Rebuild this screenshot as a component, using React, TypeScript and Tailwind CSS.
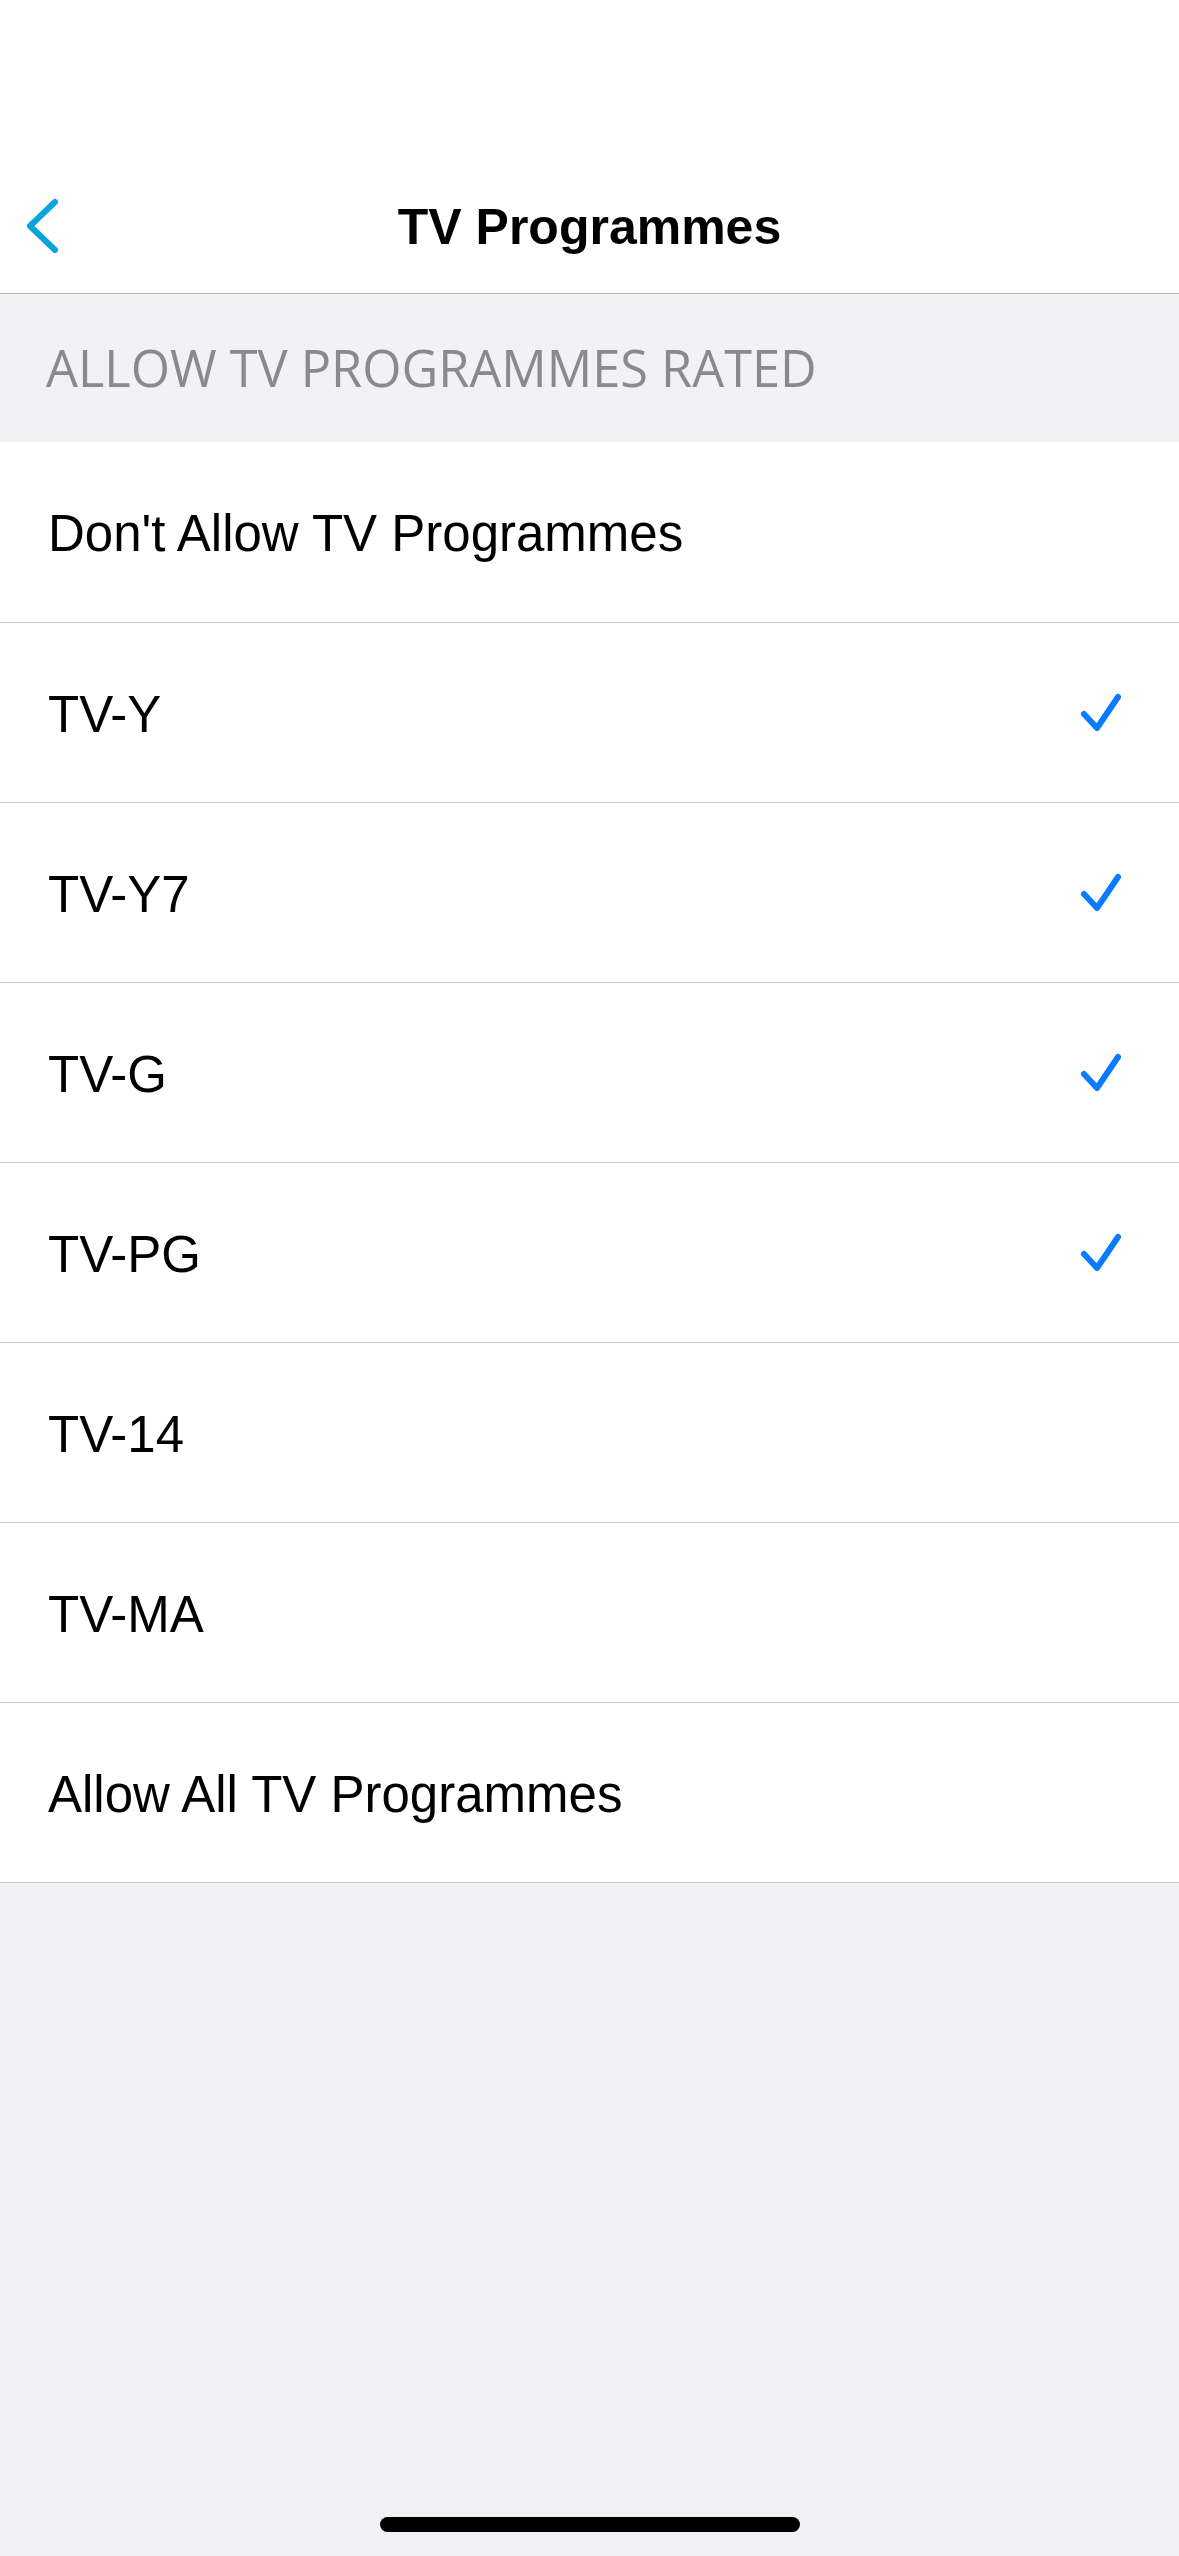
const ratings = [
  { label: "Don't Allow TV Programmes", checked: false },
  { label: 'TV-Y', checked: true },
  { label: 'TV-Y7', checked: true },
  { label: 'TV-G', checked: true },
  { label: 'TV-PG', checked: true },
  { label: 'TV-14', checked: false },
  { label: 'TV-MA', checked: false },
  { label: 'Allow All TV Programmes', checked: false },
]

function Check() {
  return (
    <svg width="44" height="42" viewBox="0 0 44 42" fill="none">
      <path
        d="M5 22L18 36L39 5"
        stroke="#0a7aff"
        strokeWidth="6"
        strokeLinecap="round"
        strokeLinejoin="round"
      />
    </svg>
  )
}

function BackChevron() {
  return (
    <svg width="40" height="60" viewBox="0 0 40 60" fill="none">
      <path
        d="M30 5L5 29L30 53"
        stroke="#06a4d7"
        strokeWidth="6"
        strokeLinecap="round"
        strokeLinejoin="round"
      />
    </svg>
  )
}

export default function App() {
  return (
    <div className="flex min-h-[2556px] w-[1179px] flex-col bg-[#f1f1f6] font-['Liberation_Sans',Arial,sans-serif]">
      {/* nav bar */}
      <div className="bg-white pt-[160px]">
        <div className="relative flex h-[134px] items-center justify-center border-b border-[#b4b4b8]">
          <div className="absolute left-[25px] top-[37px]">
            <BackChevron />
          </div>
          <h1 className="text-[50px] font-bold leading-none text-black">TV Programmes</h1>
        </div>
      </div>

      {/* section header */}
      <div className="flex h-[148px] items-center pl-[46px]">
        <span className="font-['Open_Sans',sans-serif] text-[50.5px] leading-none text-[#8a8a8e]">
          ALLOW TV PROGRAMMES RATED
        </span>
      </div>

      {/* rows */}
      <div className="bg-white">
        {ratings.map((r, i) => (
          <div
            key={r.label}
            className={
              i === 0
                ? 'flex h-[180px] items-center justify-between pl-[48px] pr-[56px]'
                : 'flex h-[180px] items-center justify-between border-t border-[#c9c9cd] pl-[48px] pr-[56px]'
            }
          >
            <span className="pt-[3px] text-[51px] leading-none text-black">{r.label}</span>
            {r.checked && <Check />}
          </div>
        ))}
      </div>
      <div className="h-px bg-[#c9c9cd]" />

      <div className="flex flex-1 items-end justify-center pb-[24px]">
        <div className="h-[15px] w-[420px] rounded-full bg-black" />
      </div>
    </div>
  )
}
